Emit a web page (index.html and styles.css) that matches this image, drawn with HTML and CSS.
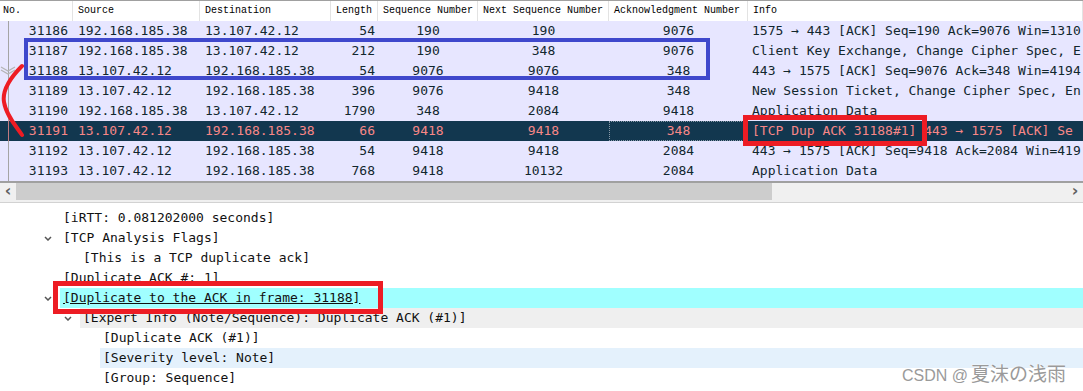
FILE: index.html
```html
<!DOCTYPE html>
<html lang="en">
<head>
    <meta charset="UTF-8">
    <meta name="viewport" content="width=device-width, initial-scale=1.0">
    <title>Wireshark - TCP Dup ACK</title>
    <link rel="stylesheet" href="styles.css">
</head>
<body>
<div class="screen">
    <div class="packet-list">
        <div class="head">
            <div class="hcell no-h">No.</div>
            <div class="hcell">Source</div>
            <div class="hcell">Destination</div>
            <div class="hcell">Length</div>
            <div class="hcell">Sequence Number</div>
            <div class="hcell">Next Sequence Number</div>
            <div class="hcell">Acknowledgment Number</div>
            <div class="hcell">Info</div>
        </div>
        <div class="row">
            <div class="no">31186</div><div class="addr">192.168.185.38</div><div class="addr">13.107.42.12</div>
            <div class="len">54</div><div class="mid">190</div><div class="mid">190</div><div class="mid">9076</div>
            <div class="info">1575 → 443 [ACK] Seq=190 Ack=9076 Win=1310</div>
        </div>
        <div class="row">
            <div class="no">31187</div><div class="addr">192.168.185.38</div><div class="addr">13.107.42.12</div>
            <div class="len">212</div><div class="mid">190</div><div class="mid">348</div><div class="mid">9076</div>
            <div class="info">Client Key Exchange, Change Cipher Spec, E</div>
        </div>
        <div class="row">
            <div class="no">31188</div><div class="addr">13.107.42.12</div><div class="addr">192.168.185.38</div>
            <div class="len">54</div><div class="mid">9076</div><div class="mid">9076</div><div class="mid">348</div>
            <div class="info">443 → 1575 [ACK] Seq=9076 Ack=348 Win=4194</div>
        </div>
        <div class="row">
            <div class="no">31189</div><div class="addr">13.107.42.12</div><div class="addr">192.168.185.38</div>
            <div class="len">396</div><div class="mid">9076</div><div class="mid">9418</div><div class="mid">348</div>
            <div class="info">New Session Ticket, Change Cipher Spec, En</div>
        </div>
        <div class="row">
            <div class="no">31190</div><div class="addr">192.168.185.38</div><div class="addr">13.107.42.12</div>
            <div class="len">1790</div><div class="mid">348</div><div class="mid">2084</div><div class="mid">9418</div>
            <div class="info">Application Data</div>
        </div>
        <div class="row selected">
            <div class="no">31191</div><div class="addr">13.107.42.12</div><div class="addr">192.168.185.38</div>
            <div class="len">66</div><div class="mid">9418</div><div class="mid">9418</div><div class="mid focus">348</div>
            <div class="info">[TCP Dup ACK 31188#1] 443 → 1575 [ACK] Se</div>
        </div>
        <div class="row">
            <div class="no">31192</div><div class="addr">13.107.42.12</div><div class="addr">192.168.185.38</div>
            <div class="len">54</div><div class="mid">9418</div><div class="mid">9418</div><div class="mid">2084</div>
            <div class="info">443 → 1575 [ACK] Seq=9418 Ack=2084 Win=419</div>
        </div>
        <div class="row">
            <div class="no">31193</div><div class="addr">13.107.42.12</div><div class="addr">192.168.185.38</div>
            <div class="len">768</div><div class="mid">9418</div><div class="mid">10132</div><div class="mid">2084</div>
            <div class="info">Application Data</div>
        </div>
        <div class="hscroll">
            <div class="sbtn">&lsaquo;</div>
            <div class="thumb"></div>
            <div class="track"></div>
            <div class="sbtn">&rsaquo;</div>
        </div>
    </div>

    <div class="splitter"></div>

    <div class="details">
        <div class="node"><div class="twisty w60"></div><div class="label">[iRTT: 0.081202000 seconds]</div></div>
        <div class="node"><div class="twisty w60"><svg class="chev" viewBox="0 0 8 5"><path d="M1 1 L4 4 L7 1"/></svg></div><div class="label">[TCP Analysis Flags]</div></div>
        <div class="node"><div class="twisty w80"></div><div class="label">[This is a TCP duplicate ack]</div></div>
        <div class="node"><div class="twisty w60"></div><div class="label">[Duplicate ACK #: 1]</div></div>
        <div class="node"><div class="twisty w60"><svg class="chev" viewBox="0 0 8 5"><path d="M1 1 L4 4 L7 1"/></svg></div><div class="label link">[Duplicate to the ACK in frame: 31188]</div></div>
        <div class="node"><div class="twisty w80"><svg class="chev" viewBox="0 0 8 5"><path d="M1 1 L4 4 L7 1"/></svg></div><div class="label expert">[Expert Info (Note/Sequence): Duplicate ACK (#1)]</div></div>
        <div class="node"><div class="twisty w100"></div><div class="label">[Duplicate ACK (#1)]</div></div>
        <div class="node"><div class="twisty w100"></div><div class="label hover">[Severity level: Note]</div></div>
        <div class="node"><div class="twisty w100"></div><div class="label">[Group: Sequence]</div></div>
    </div>

    <!-- annotations drawn on top of the capture -->
    <svg class="related" viewBox="0 0 17 10"><path d="M1 1 L8 5 L15 1 M1 4 L8 8 L15 4"/></svg>
    <svg class="curve" viewBox="0 0 30 80"><path d="M22 6 C 10 18, 2 30, 4 42 C 6 55, 16 66, 22 75"/></svg>
    <div class="mark blue-box"></div>
    <div class="mark red-info"></div>
    <div class="mark red-frame"></div>
    <div class="watermark"><span class="wm-latin">CSDN @</span>夏沫の浅雨</div>
</div>
</body>
</html>
```

FILE: styles.css
```css
body {
    margin: 0;
    background-color: white;
    overflow: hidden;
}
.screen {
    position: relative;
    width: 1083px;
    height: 391px;
    overflow: hidden;
    font-family: "DejaVu Sans Mono", monospace;
    font-size: 13px;
    color: #12272e;
}
.head,
.row {
    display: grid;
    grid-template-columns: 73px 127px 131px 47px 100px 131px 139px 1fr;
}
.head {
    height: 20px;
    border-top: 1px solid #a0a0a0;
    background-color: white;
    font-family: "Liberation Mono", monospace;
    font-size: 10px;
    color: #000;
}
.hcell {
    line-height: 20px;
    padding-left: 5px;
    border-right: 1px solid #e3e3e3;
    white-space: nowrap;
    overflow: hidden;
}
.hcell.no-h {
    padding-left: 3px;
}
.row {
    height: 20px;
    line-height: 20px;
    background-color: #e7e6ff;
    white-space: nowrap;
}
.row > div {
    overflow: hidden;
}
.no {
    text-align: right;
    padding-right: 5px;
    background: linear-gradient(#a4a4a4, #a4a4a4) 8px 0 / 1px 100% no-repeat;
}
.addr {
    padding-left: 5px;
}
.len {
    text-align: right;
    padding-right: 3px;
}
.mid {
    text-align: center;
}
.info {
    padding-left: 4px;
}
.row.selected {
    background-color: #12374f;
    color: #f78787;
}
.row.selected .no {
    background: linear-gradient(#c07a80, #c07a80) 8px 0 / 1px 100% no-repeat;
}
.focus {
    outline: 1px dotted #8a9aa8;
    outline-offset: -1px;
}
.hscroll {
    display: flex;
    height: 17px;
    border-top: 2px solid #a0a0a0;
    background-color: #f0f0f0;
}
.sbtn {
    width: 16px;
    font-family: "DejaVu Sans", sans-serif;
    font-size: 16px;
    font-weight: bold;
    line-height: 15px;
    text-align: center;
    color: #606060;
}
.thumb {
    width: 756px;
    background-color: #cdcdcd;
}
.track {
    flex: 1;
}
.splitter {
    height: 2px;
    background-color: #f0f0f0;
    border-bottom: 1px solid #d2d2d2;
}
.details {
    padding-top: 5px;
    color: #111;
}
.node {
    display: flex;
    height: 20px;
    line-height: 20px;
    white-space: nowrap;
}
.twisty {
    display: flex;
    align-items: center;
    justify-content: flex-end;
    flex-shrink: 0;
}
.w60 { width: 60px; }
.w80 { width: 80px; }
.w100 { width: 100px; }
.chev {
    width: 8px;
    height: 5px;
    margin-right: 8px;
    fill: none;
    stroke: #555;
    stroke-width: 1.5;
}
.label {
    flex: 1;
    padding-left: 3px;
}
.label.link {
    background-color: #a0ffff;
    text-decoration: underline;
}
.label.expert {
    background-color: #efefef;
}
.label.hover {
    background-color: #e4f1fc;
}
.related {
    position: absolute;
    left: 0;
    top: 66px;
    width: 17px;
    height: 10px;
    fill: none;
    stroke: #b4b4b4;
    stroke-width: 1.2;
}
.curve {
    position: absolute;
    left: 0;
    top: 60px;
    width: 30px;
    height: 80px;
    fill: none;
    stroke: #ee1c24;
    stroke-width: 4;
    stroke-linecap: round;
}
.mark {
    position: absolute;
    box-sizing: border-box;
}
.blue-box {
    left: 24px;
    top: 38px;
    width: 686px;
    height: 42px;
    border: 4px solid #3f48cc;
}
.red-info {
    left: 743px;
    top: 115px;
    width: 184px;
    height: 31px;
    border: 5px solid #ed1c24;
}
.red-frame {
    left: 53px;
    top: 281px;
    width: 330px;
    height: 33px;
    border: 5px solid #ed1c24;
}
.watermark {
    position: absolute;
    left: 902px;
    top: 360px;
    font-family: "Noto Sans CJK SC", sans-serif;
    font-size: 19px;
    line-height: 26px;
    color: #9a9a9a;
    text-shadow: 0 0 2px white, 0 0 1px white;
    white-space: nowrap;
}
.wm-latin {
    font-family: "Liberation Sans", sans-serif;
    font-size: 16px;
    margin-right: 3px;
}
```
